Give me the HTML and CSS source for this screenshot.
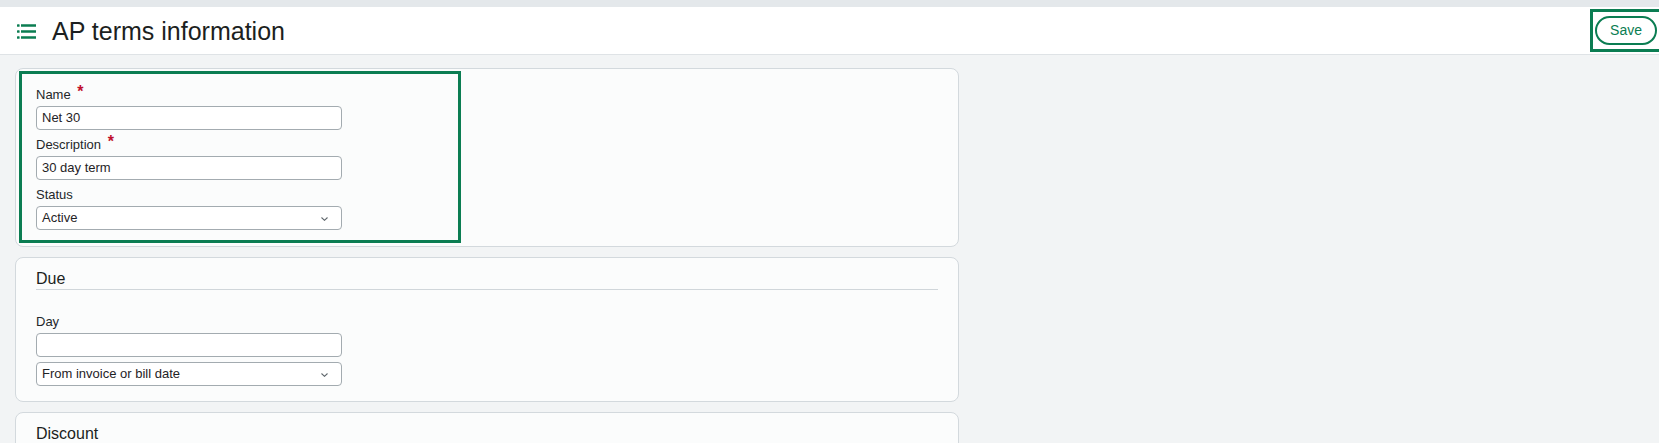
FILE: index.html
```html
<!DOCTYPE html>
<html lang="en">
<head>
<meta charset="utf-8">
<title>AP terms information</title>
<link rel="stylesheet" href="styles.css">
</head>
<body>
<div class="topbar"></div>
<header class="header">
  <div class="title-group">
    <svg class="menu-icon" width="19" height="15" viewBox="0 0 19 15" aria-hidden="true">
      <rect x="0" y="0.25" width="2.6" height="2.5" rx="0.6" fill="#0b7d52"/>
      <rect x="4" y="0.25" width="15" height="2.5" fill="#0b7d52"/>
      <rect x="0" y="6.25" width="2.6" height="2.5" rx="0.6" fill="#0b7d52"/>
      <rect x="4" y="6.25" width="15" height="2.5" fill="#0b7d52"/>
      <rect x="0" y="12.25" width="2.6" height="2.5" rx="0.6" fill="#0b7d52"/>
      <rect x="4" y="12.25" width="15" height="2.5" fill="#0b7d52"/>
    </svg>
    <h1 class="title">AP terms information</h1>
  </div>
  <div class="save-focus"><button class="save-btn" type="button">Save</button></div>
</header>
<main class="main">
  <section class="card card-general">
    <div class="focus-box">
      <div class="field">
        <div class="label">Name <span class="req">*</span></div>
        <div class="control">Net 30</div>
      </div>
      <div class="field">
        <div class="label">Description <span class="req">*</span></div>
        <div class="control">30 day term</div>
      </div>
      <div class="field">
        <div class="label">Status</div>
        <div class="control select"><span>Active</span>
          <svg class="chev" width="7" height="4" viewBox="0 0 7 4" aria-hidden="true"><path d="M0.5 0.5 L3.5 3.3 L6.5 0.5" fill="none" stroke="#5f676c" stroke-width="1.1"/></svg>
        </div>
      </div>
    </div>
  </section>

  <section class="card card-section">
    <h2 class="card-title">Due</h2>
    <div class="field field-first">
      <div class="label">Day</div>
      <div class="control"></div>
      <div class="control select select-follow"><span>From invoice or bill date</span>
        <svg class="chev" width="7" height="4" viewBox="0 0 7 4" aria-hidden="true"><path d="M0.5 0.5 L3.5 3.3 L6.5 0.5" fill="none" stroke="#5f676c" stroke-width="1.1"/></svg>
      </div>
    </div>
  </section>

  <section class="card card-section">
    <h2 class="card-title">Discount</h2>
    <div class="field field-first">
      <div class="label">Day</div>
      <div class="control"></div>
    </div>
  </section>
</main>
</body>
</html>
```

FILE: styles.css
```css
* {
  box-sizing: border-box;
}

html, body {
  margin: 0;
  padding: 0;
}

body {
  font-family: "Liberation Sans", Arial, sans-serif;
  color: #222629;
  background: #f2f4f5;
  overflow: hidden;
}

.topbar {
  height: 7px;
  background: #e4e8eb;
}

.header {
  height: 48px;
  background: #ffffff;
  border-bottom: 1px solid #dfe3e6;
  display: flex;
  align-items: center;
  justify-content: space-between;
  padding-left: 17px;
  overflow: hidden;
}

.title-group {
  display: flex;
  align-items: center;
  gap: 16px;
}

.menu-icon {
  display: block;
  margin-top: 2px;
}

.title {
  margin: 0;
  font-size: 25px;
  line-height: 30px;
  font-weight: 400;
  color: #1c1f21;
}

.save-focus {
  border: 3px solid #0b7d52;
  padding: 4px 2px;
  margin-right: -3px;
}

.save-btn {
  display: block;
  height: 29px;
  padding: 0 13px;
  border: 2px solid #0b7d52;
  border-radius: 15px;
  background: #ffffff;
  color: #0b7d52;
  font-family: "Liberation Sans", Arial, sans-serif;
  font-size: 14px;
  line-height: 25px;
}

.main {
  padding: 13px 0 0 15px;
}

.card {
  width: 944px;
  background: #fbfcfc;
  border: 1px solid #d3d9dd;
  border-radius: 8px;
  margin-bottom: 10px;
}

.card-general {
  padding: 2px 3px 3px;
}

.focus-box {
  width: 442px;
  border: 3px solid #0b7d52;
  padding: 12px 14px 10px;
}

.field + .field {
  margin-top: 6px;
}

.label {
  font-size: 13px;
  line-height: 17px;
  color: #23272a;
  margin-bottom: 3px;
}

.req {
  color: #c0102c;
  font-weight: 700;
  font-size: 16px;
  line-height: 0;
  vertical-align: 2px;
  margin-left: 3px;
}

.control {
  width: 306px;
  height: 24px;
  border: 1px solid #a3abb0;
  border-radius: 4px;
  background: #ffffff;
  padding: 0 5px;
  font-size: 13px;
  line-height: 22px;
  color: #1f2326;
  display: flex;
  align-items: center;
}

.select {
  justify-content: space-between;
  padding-right: 13px;
}

.chev {
  display: block;
  margin-top: 1px;
}

.select-follow {
  margin-top: 5px;
}

.card-section {
  padding: 11px 20px 15px;
}

.card-title {
  margin: 0;
  font-size: 16px;
  line-height: 20px;
  font-weight: 400;
  color: #1c1f21;
  border-bottom: 1px solid #d0d6da;
}

.field-first {
  margin-top: 23px;
}
```
